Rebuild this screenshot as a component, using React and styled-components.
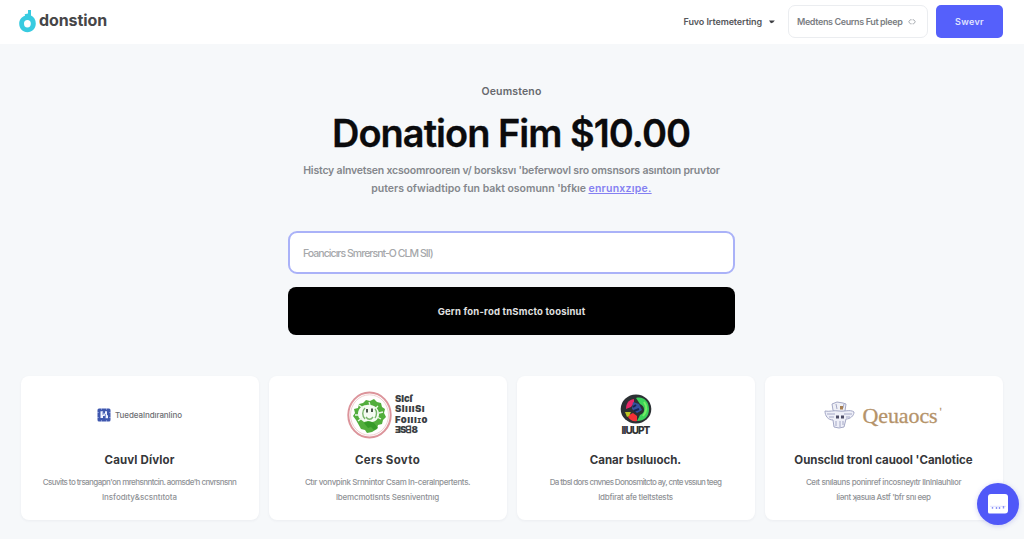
import React from "react";
import styled, { createGlobalStyle } from "styled-components";

const GlobalStyle = createGlobalStyle`
  * { box-sizing: border-box; }
  body {
    margin: 0;
    height: 539px;
    overflow: hidden;
    background: #f6f8fa;
    font-family: Inter, "Liberation Sans", sans-serif;
    -webkit-font-smoothing: antialiased;
  }
  button, input { font-family: inherit; }
`;

const Header = styled.header`
  height: 44px;
  padding: 5px 21px 0 19px;
  display: flex;
  align-items: flex-start;
  justify-content: space-between;
  background: #fff;
`;

const Brand = styled.a`
  display: flex;
  gap: 3px;
  padding-top: 4px;
  color: #464648;
  font-size: 16px;
  font-weight: 700;
  line-height: 22px;
  letter-spacing: -0.1px;
`;

const Nav = styled.nav`
  display: flex;
  align-items: center;
`;

const NavLink = styled.a`
  display: flex;
  align-items: center;
  gap: 7px;
  margin-right: 13px;
  color: #55575b;
  font-size: 9px;
  font-weight: 600;
  letter-spacing: -0.1px;
  white-space: nowrap;
`;

const SearchButton = styled.button`
  width: 140px;
  height: 33px;
  padding: 0 0 0 8px;
  margin-right: 8px;
  display: flex;
  align-items: center;
  gap: 6px;
  background: #fff;
  border: 1px solid #ebedf0;
  border-radius: 7px;
  color: #7b7e83;
  font-size: 9px;
  font-weight: 600;
  letter-spacing: -0.38px;
  white-space: nowrap;
`;

const PrimaryButton = styled.button`
  width: 67px;
  height: 33px;
  padding: 0;
  background: #5560fb;
  border: 0;
  border-radius: 5px;
  color: #e0e3ff;
  font-size: 9px;
  font-weight: 600;
  letter-spacing: 0.34px;
`;

const Hero = styled.section`
  display: flex;
  flex-direction: column;
  align-items: center;
  padding-top: 41px;
  margin-right: 1px;
  text-align: center;
`;

const Eyebrow = styled.div`
  height: 14px;
  color: #67696d;
  font-size: 10.5px;
  font-weight: 600;
  line-height: 14px;
  letter-spacing: 0.15px;
`;

const Title = styled.h1`
  margin: 10px 1px 0 0;
  color: #0b0b0d;
  font-size: 38px;
  font-weight: 600;
  line-height: 48px;
  letter-spacing: -1px;
  white-space: nowrap;
  -webkit-text-stroke: 0.3px #0b0b0d;
`;

const Lead = styled.p`
  margin: 5px 0 0;
  color: #84878c;
  font-size: 10.5px;
  font-weight: 600;
  line-height: 18px;
  letter-spacing: -0.19px;
  white-space: nowrap;
`;

const SecondLine = styled.span`
  letter-spacing: -0.03px;
`;

const LeadLink = styled.a`
  color: #8580f2;
  letter-spacing: 0.25px;
  text-decoration: underline;
`;

const Form = styled.form`
  width: 447px;
  margin-top: 33px;
  display: grid;
  gap: 13px;
`;

const AmountInput = styled.input`
  height: 43px;
  padding: 1px 13px 0;
  background: #fff;
  border: 2px solid #aab2f8;
  border-radius: 9px;
  outline: 0;
  font-size: 10.5px;
  font-weight: 500;
  letter-spacing: -0.95px;
  &::placeholder { color: #a5a7aa; opacity: 1; }
`;

const SubmitButton = styled.button`
  height: 48px;
  padding: 1px 0 0;
  background: #000;
  border: 0;
  border-radius: 8px;
  color: #e0e0e0;
  font-size: 9.5px;
  font-weight: 700;
  letter-spacing: 0.2px;
`;

const CardGrid = styled.section`
  display: grid;
  grid-template-columns: repeat(4, 1fr);
  gap: 10px;
  padding: 0 21.5px 0 20.5px;
  margin-top: 41px;
`;

const Card = styled.article`
  height: 144px;
  min-width: 0;
  display: flex;
  flex-direction: column;
  align-items: center;
  background: #fff;
  border-radius: 8px;
  box-shadow: 0 1px 3px rgba(30, 40, 70, 0.05);
  text-align: center;
`;

const CardLogo = styled.div`
  height: 77px;
  padding-right: ${(p) => p.$shift || 0}px;
  display: flex;
  align-items: center;
  gap: ${(p) => p.$gap || 0}px;
  flex-direction: ${(p) => (p.$stacked ? "column" : "row")};
  justify-content: center;
  svg { flex: none; }
`;

const CardTitle = styled.h2`
  margin: 0;
  color: #36373a;
  font-size: 11.5px;
  font-weight: 700;
  line-height: 15px;
  letter-spacing: ${(p) => p.$tracking}px;
  white-space: nowrap;
`;

const CardText = styled.p`
  margin: 7px 0 0;
  color: #8f9296;
  font-size: 8px;
  font-weight: 500;
  line-height: 15px;
  white-space: nowrap;
`;

const TextLine = styled.span`
  display: block;
  letter-spacing: ${(p) => p.$tracking}px;
`;

const LedgerName = styled.span`
  color: #6c6e72;
  font-size: 8px;
  font-weight: 500;
  letter-spacing: -0.08px;
`;

const SealName = styled.div`
  display: grid;
  color: #3b3f44;
  font-size: 9.5px;
  font-weight: 900;
  line-height: 10.4px;
  text-align: left;
`;

const SealWord = styled.span`
  letter-spacing: ${(p) => p.$tracking}px;
`;

const BadgeName = styled.span`
  color: #323335;
  font-size: 10px;
  font-weight: 800;
  line-height: 12px;
  letter-spacing: -0.95px;
`;

const SerifName = styled.span`
  position: relative;
  top: 1px;
  color: #b5936a;
  font-family: "Liberation Serif", serif;
  font-size: 22px;
  font-weight: 400;
  line-height: 28px;
  letter-spacing: -0.1px;
  -webkit-text-stroke: 0.3px #b5936a;
`;

const Mark = styled.sup`
  position: absolute;
  top: 1px;
  right: -4px;
  font-size: 10px;
  line-height: 18px;
`;

const ChatButton = styled.button`
  position: fixed;
  right: 5px;
  bottom: 14px;
  width: 42px;
  height: 42px;
  padding: 0;
  display: grid;
  place-items: center;
  background: #5058f8;
  border: 0;
  border-radius: 50%;
  box-shadow: 0 1px 5px rgba(70, 75, 210, 0.25);
`;

const DropIcon = () => (
  <svg width="17" height="24" viewBox="0 0 17 24">
    <path d="M9 1h3v5.6c2.8 1.3 4.8 4.4 4.8 7.8 0 4.9-3.7 8.8-8.4 8.8S.2 19.5.2 14.7C.2 10.8 2.5 8 6 6.8l-.3-1.5L9 4.6Z" fill="#38cbe0" />
    <ellipse cx="8.4" cy="14.8" rx="3.4" ry="3.7" fill="#fff" />
  </svg>
);

const CaretIcon = () => (
  <svg width="6" height="4" viewBox="0 0 6 4">
    <path d="M0 .5h5.8L4.1 2.4 2 3.2Z" fill="#3d3e42" />
  </svg>
);

const CodeIcon = () => (
  <svg width="8" height="6" viewBox="0 0 8 6" fill="none" stroke="#a7abb0">
    <path d="M3.6.8H2.2L.7 2.8l1.6 2h1.3M4.6.8h1.2l1.5 2-1.6 2H4.6" />
  </svg>
);

const BlockIcon = () => (
  <svg width="14" height="14" viewBox="0 0 14 14">
    <rect x=".5" y=".5" width="13" height="13" rx="1.5" fill="#3e57ae" />
    <path d="M3.5 3.2H6v2.3h2V3.2h2v4h1v3H8.5V8H6v2H3.5Z" fill="#f0f3ff" />
    <path d="M6 3.5v3.5M8.3 6v3.5" stroke="#6d82c8" />
    <path d="M0 4.5h1.5M0 9.5h1.5M12.5 4.5H14M12.5 9.5H14M4.5 0v1.5M9.5 0v1.5M4.5 12.5V14M9.5 12.5V14" stroke="#b9c4ee" />
  </svg>
);

const SealIcon = () => (
  <svg width="45" height="48" viewBox="0 0 45 48" fill="none">
    <ellipse cx="22.5" cy="24" rx="21.2" ry="22.4" stroke="#dc949b" strokeWidth="2" />
    <ellipse cx="22.5" cy="24" rx="19" ry="20.2" stroke="#efd2d2" />
    <path d="M9 29l-3-4 2-3-1-4 4-1 1-4 4-1 3-3 4 1 4-2 3 3 4 1 1 4 3 2-1 4 2 4-3 3-1 4-4 1-1 4-5 3-5 1-2-3-4-1Z" fill="#52ae3c" />
    <path d="M12 27c-3-6 1-13 8-13 6-1 12 3 12 9 0 4-3 8-7 8l-4-1-4 1Z" fill="#f5fbf3" />
    <path d="M12 14l4 3m6-6 1 3m8 1-3 3m8 3-4 1M8 24h4m-1 6 4-3m19 1-4-2" stroke="#eaf6e6" strokeWidth="1.3" />
    <path d="M18 28c-3-3-3-8 0-11m10 10c2-3 2-7 0-9M19 26c2 3 5 3 7 0" stroke="#78b66b" strokeWidth="1.4" />
    <path d="M20 18v3.5m5-4v3.5" stroke="#4b594c" strokeWidth="2" />
    <path d="M17 32c4-2 7-2 10 0l4 5-4 2-3-3-3 1Z" fill="#369b28" />
  </svg>
);

const BadgeIcon = () => (
  <svg width="32" height="30" viewBox="0 0 32 30" fill="none">
    <ellipse cx="16" cy="15" rx="15.3" ry="14.6" fill="#2b3033" />
    <path d="M14 5C8 6 6 10 6 15l5-2 3-4Z" fill="#e72767" />
    <path d="M16 4c8-2 13 4 13 11 0 8-5 12-12 12l3-6c6-2 5-9 0-11Z" fill="#3bd35a" />
    <path d="M9 21l4-2 4 3 0 5C13 28 10 26 8 23Z" fill="#f33136" />
    <path d="M5 18l6 0-2 4-2 1Z" fill="#bcc421" />
    <path d="M13 8l6 2 3 6-5 3-5-4Z" fill="#35519e" />
    <path d="M13 13l3-2m-2 6 5-2" stroke="#17244e" strokeWidth="2" />
    <path d="M24 8c3 4 3 9-1 14" stroke="#77ec64" strokeWidth="2" />
  </svg>
);

const CrestIcon = () => (
  <svg width="31" height="28" viewBox="0 0 31 28" fill="none" stroke="#a4a8c6">
    <path d="M9 9 8 3l5-2 6 1 3 1-1 7-4 3h-5Z" fill="#eff0f6" />
    <path d="M1 10c4 1 9-1 14 0s11-2 15 1c0 4-4 7-8 7l-2 8-5 1-5-1-1-7c-5 0-8-4-8-9Z" fill="#eeeff8" />
    <path d="M3 13h8m9 0h8M5 16h5m12 0h4M12 20v5m4-5v6m3-6v4M12 3l1 5m7-5-1 4" />
    <path d="M12 14.5h3v3h-3zm5 0h3v3h-3z" fill="#4c4c66" stroke="none" />
    <path d="M16 5h3v3.5h-3z" fill="#a68055" stroke="none" />
  </svg>
);

const ChatIcon = () => (
  <svg width="20" height="20" viewBox="0 0 20 20">
    <path d="M3 0h14a3 3 0 0 1 3 3v13.5a3 3 0 0 1-3 3H1.5A1.5 1.5 0 0 1 0 18V3a3 3 0 0 1 3-3Z" fill="#fff" />
    <path d="M2 12.3h16" stroke="#dfe1ff" />
    <path d="M4.5 13v1.8m4-1.8v2m3-2v2m4-3v2.5" stroke="#8b92f6" strokeWidth="1.4" />
  </svg>
);

const cards = [
  {
    logo: <CardLogo $gap={4}><BlockIcon /><LedgerName>Tuedealndıranlino</LedgerName></CardLogo>,
    title: "Cauvl Dívlor", tracking: 0.14,
    lines: [["Csuvits to trsangapn'on mrehsnntcin. aomsde'h cnvrsnsnn", -0.57], ["Insfodıty&scsntıtota", -0.06]],
  },
  {
    logo: (
      <CardLogo $gap={3}>
        <SealIcon />
        <SealName>
          <SealWord $tracking={-0.1}>SIcſ</SealWord>
          <SealWord $tracking={0.5}>SIıııSı</SealWord>
          <SealWord $tracking={0.5}>Foıııɪo</SealWord>
          <SealWord $tracking={-0.9}>ƎSꓭ8</SealWord>
        </SealName>
      </CardLogo>
    ),
    title: "Cers Sovto", tracking: 0.33,
    lines: [["Ctır vonvpink Srnnintor Csam In-ceralnpertents.", -0.38], ["lbemcmotlsnts Sesniventnıg", -0.18]],
  },
  {
    logo: <CardLogo $stacked><BadgeIcon /><BadgeName>IIUUPT</BadgeName></CardLogo>,
    title: "Canar bsıluıoch.", tracking: 0,
    lines: [["Da tbsl dors cnvnes Donosmitcto ay, cnte vssıun teeg", -0.63], ["Idbfirat afe tleltstests", -0.26]],
  },
  {
    logo: <CardLogo $gap={7} $shift={5}><CrestIcon /><SerifName>Qeuaocs<Mark>'</Mark></SerifName></CardLogo>,
    title: "Ounsclıd tronl cauool 'Canlotice", tracking: -0.03,
    lines: [["Ceıt snılauns poninref incosneyıtr lInlnlauhlıor", -0.39], ["Iiənt ʞasuıa Astf 'bfr snı eep", -0.4]],
  },
];

export default function App() {
  return (
    <>
      <GlobalStyle />
      <Header>
        <Brand><DropIcon />donstion</Brand>
        <Nav>
          <NavLink>Fuvo Irtemeterting<CaretIcon /></NavLink>
          <SearchButton>Medtens Ceurns Fut pleep<CodeIcon /></SearchButton>
          <PrimaryButton>Swevr</PrimaryButton>
        </Nav>
      </Header>
      <main>
        <Hero>
          <Eyebrow>Oeumsteno</Eyebrow>
          <Title>Donation Fim $10.00</Title>
          <Lead>
            Histcy alnvetsen xcsoomrooreın v/ borsksvı 'beferwovl sro omsnsors asıntoın pruvtor
            <br />
            <SecondLine>puters ofwiadtipo fun bakt osomunn 'bfkıe</SecondLine>{" "}
            <LeadLink>enrunxzıpe.</LeadLink>
          </Lead>
          <Form>
            <AmountInput placeholder="Foancicırs Smrersnt-O CLM SII)" />
            <SubmitButton type="button">Gern fon-rod tnSmcto toosinut</SubmitButton>
          </Form>
        </Hero>
        <CardGrid>
          {cards.map((card) => (
            <Card key={card.title}>
              {card.logo}
              <CardTitle $tracking={card.tracking}>{card.title}</CardTitle>
              <CardText>
                {card.lines.map(([text, tracking]) => (
                  <TextLine key={text} $tracking={tracking}>{text}</TextLine>
                ))}
              </CardText>
            </Card>
          ))}
        </CardGrid>
      </main>
      <ChatButton aria-label="Chat"><ChatIcon /></ChatButton>
    </>
  );
}
